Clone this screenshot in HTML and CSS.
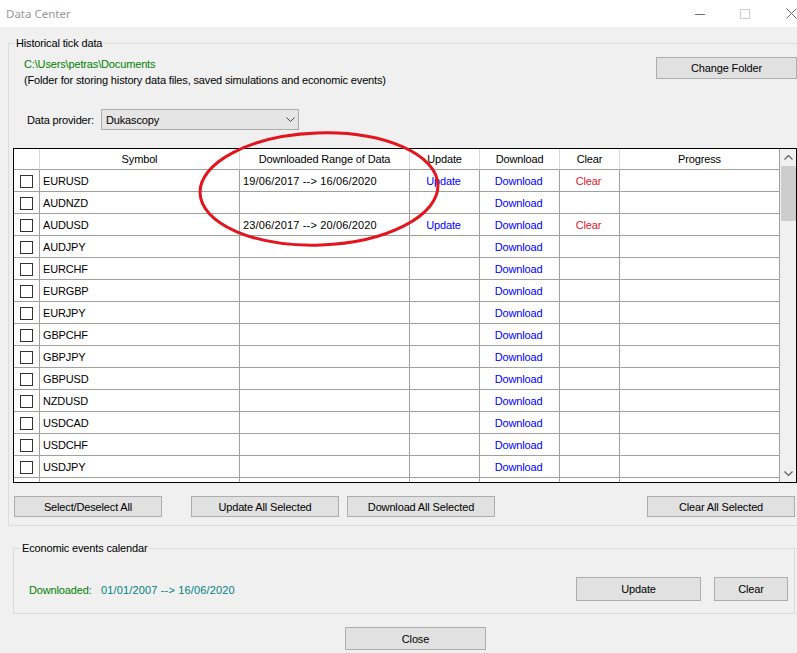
FILE: index.html
```html
<!DOCTYPE html>
<html>
<head>
<meta charset="utf-8">
<title>Data Center</title>
<link rel="stylesheet" href="styles.css">
</head>
<body>
<div class="titlebar">
  <span class="title">Data Center</span>
  <div class="caption">
    <svg class="cap-min" width="10" height="10" viewBox="0 0 10 10"><line x1="0" y1="5.5" x2="10" y2="5.5" stroke="#6f6f6f" stroke-width="1"/></svg>
    <svg class="cap-max" width="10" height="10" viewBox="0 0 10 10"><rect x="0.5" y="0.5" width="9" height="9" fill="none" stroke="#cfcfcf" stroke-width="1"/></svg>
    <svg class="cap-close" width="11" height="11" viewBox="0 0 11 11"><path d="M0.5 0.5 L10.5 10.5 M10.5 0.5 L0.5 10.5" stroke="#6f6f6f" stroke-width="1" fill="none"/></svg>
  </div>
</div>

<div class="group hist">
  <div class="legend">Historical tick data</div>
  <div class="folder-row">
    <div class="folder-text">
      <div class="path">C:\Users\petras\Documents</div>
      <div>(Folder for storing history data files, saved simulations and economic events)</div>
    </div>
    <button class="btn change">Change Folder</button>
  </div>
  <div class="provider">
    <span class="provider-label">Data provider:</span>
    <div class="select">
      <span>Dukascopy</span>
      <svg class="chev" width="9" height="5" viewBox="0 0 9 5"><path d="M0.5 0.5 L4.5 4.5 L8.5 0.5" fill="none" stroke="#444" stroke-width="1"/></svg>
    </div>
  </div>

  <div class="grid">
    <div class="grid-main">
      <div class="row hrow">
        <div class="cell"></div>
        <div class="cell">Symbol</div>
        <div class="cell">Downloaded Range of Data</div>
        <div class="cell">Update</div>
        <div class="cell">Download</div>
        <div class="cell">Clear</div>
        <div class="cell">Progress</div>
      </div>
      <div class="row"><div class="cell chk"><span class="box"></span></div><div class="cell sym">EURUSD</div><div class="cell sym date">19/06/2017 --&gt; 16/06/2020</div><div class="cell lnk">Update</div><div class="cell lnk">Download</div><div class="cell clr">Clear</div><div class="cell"></div></div>
      <div class="row"><div class="cell chk"><span class="box"></span></div><div class="cell sym">AUDNZD</div><div class="cell"></div><div class="cell"></div><div class="cell lnk">Download</div><div class="cell"></div><div class="cell"></div></div>
      <div class="row"><div class="cell chk"><span class="box"></span></div><div class="cell sym">AUDUSD</div><div class="cell sym date">23/06/2017 --&gt; 20/06/2020</div><div class="cell lnk">Update</div><div class="cell lnk">Download</div><div class="cell clr">Clear</div><div class="cell"></div></div>
      <div class="row"><div class="cell chk"><span class="box"></span></div><div class="cell sym">AUDJPY</div><div class="cell"></div><div class="cell"></div><div class="cell lnk">Download</div><div class="cell"></div><div class="cell"></div></div>
      <div class="row"><div class="cell chk"><span class="box"></span></div><div class="cell sym">EURCHF</div><div class="cell"></div><div class="cell"></div><div class="cell lnk">Download</div><div class="cell"></div><div class="cell"></div></div>
      <div class="row"><div class="cell chk"><span class="box"></span></div><div class="cell sym">EURGBP</div><div class="cell"></div><div class="cell"></div><div class="cell lnk">Download</div><div class="cell"></div><div class="cell"></div></div>
      <div class="row"><div class="cell chk"><span class="box"></span></div><div class="cell sym">EURJPY</div><div class="cell"></div><div class="cell"></div><div class="cell lnk">Download</div><div class="cell"></div><div class="cell"></div></div>
      <div class="row"><div class="cell chk"><span class="box"></span></div><div class="cell sym">GBPCHF</div><div class="cell"></div><div class="cell"></div><div class="cell lnk">Download</div><div class="cell"></div><div class="cell"></div></div>
      <div class="row"><div class="cell chk"><span class="box"></span></div><div class="cell sym">GBPJPY</div><div class="cell"></div><div class="cell"></div><div class="cell lnk">Download</div><div class="cell"></div><div class="cell"></div></div>
      <div class="row"><div class="cell chk"><span class="box"></span></div><div class="cell sym">GBPUSD</div><div class="cell"></div><div class="cell"></div><div class="cell lnk">Download</div><div class="cell"></div><div class="cell"></div></div>
      <div class="row"><div class="cell chk"><span class="box"></span></div><div class="cell sym">NZDUSD</div><div class="cell"></div><div class="cell"></div><div class="cell lnk">Download</div><div class="cell"></div><div class="cell"></div></div>
      <div class="row"><div class="cell chk"><span class="box"></span></div><div class="cell sym">USDCAD</div><div class="cell"></div><div class="cell"></div><div class="cell lnk">Download</div><div class="cell"></div><div class="cell"></div></div>
      <div class="row"><div class="cell chk"><span class="box"></span></div><div class="cell sym">USDCHF</div><div class="cell"></div><div class="cell"></div><div class="cell lnk">Download</div><div class="cell"></div><div class="cell"></div></div>
      <div class="row"><div class="cell chk"><span class="box"></span></div><div class="cell sym">USDJPY</div><div class="cell"></div><div class="cell"></div><div class="cell lnk">Download</div><div class="cell"></div><div class="cell"></div></div>
      <div class="row"><div class="cell"></div><div class="cell"></div><div class="cell"></div><div class="cell"></div><div class="cell"></div><div class="cell"></div><div class="cell"></div></div>
    </div>
    <div class="scroll">
      <div class="arrow">
        <svg width="9" height="5" viewBox="0 0 9 5"><path d="M0.5 4.5 L4.5 0.5 L8.5 4.5" fill="none" stroke="#606060" stroke-width="1.2"/></svg>
      </div>
      <div class="thumb"></div>
      <div class="track"></div>
      <div class="arrow">
        <svg width="9" height="5" viewBox="0 0 9 5"><path d="M0.5 0.5 L4.5 4.5 L8.5 0.5" fill="none" stroke="#606060" stroke-width="1.2"/></svg>
      </div>
    </div>
  </div>

  <div class="actions">
    <button class="btn act">Select/Deselect All</button>
    <button class="btn act a2">Update All Selected</button>
    <button class="btn act a3">Download All Selected</button>
    <button class="btn act a4">Clear All Selected</button>
  </div>
</div>

<div class="group econ">
  <div class="legend">Economic events calendar</div>
  <div class="econ-row">
    <span class="dl-label">Downloaded:</span>
    <span class="dl-range">01/01/2007 --&gt; 16/06/2020</span>
    <button class="btn eupd">Update</button>
    <button class="btn eclr">Clear</button>
  </div>
</div>

<div class="close-row">
  <button class="btn close">Close</button>
</div>

<svg class="mark" width="797" height="653" viewBox="0 0 797 653">
  <ellipse cx="319" cy="189" rx="119" ry="56" fill="none" stroke="#e3161f" stroke-width="3" transform="rotate(-2 319 189)"/>
</svg>
</body>
</html>
```

FILE: styles.css
```css
html, body {
  margin: 0;
  padding: 0;
  overflow: hidden;
}

body {
  width: 797px;
  height: 653px;
  background: #f0f0f0;
  font-family: "Liberation Sans", Arial, sans-serif;
  font-size: 11px;
  letter-spacing: -0.15px;
  color: #000;
  position: relative;
}

/* title bar */
.titlebar {
  height: 27px;
  background: #fff;
  display: flex;
  align-items: center;
}

.title {
  font-family: "Noto Sans", "Open Sans", sans-serif;
  font-size: 11.5px;
  letter-spacing: 0;
  color: #999;
  padding-left: 6px;
}

.caption {
  margin-left: auto;
  display: flex;
  align-items: center;
}

.cap-min { margin-right: 35px; }
.cap-max { margin-right: 36px; }
.cap-close { display: block; }

/* group boxes */
.group {
  border: 1px solid #dcdcdc;
  box-sizing: border-box;
}

.legend {
  width: fit-content;
  background: #f0f0f0;
  padding: 0 2px;
  line-height: 13px;
  margin-top: -7px;
}

.hist {
  margin: 16px 0 0 8px;
  width: 800px;
  padding-bottom: 8px;
}

.hist .legend {
  margin-left: 5px;
}

.folder-row {
  display: flex;
  align-items: flex-start;
  margin-top: 6px;
  padding-left: 15px;
}

.folder-text {
  line-height: 16px;
}

.path {
  color: #008000;
}

/* buttons */
.btn {
  font-family: inherit;
  font-size: 11px;
  letter-spacing: -0.15px;
  color: #000;
  background: #e1e1e1;
  border: 1px solid #adadad;
  box-sizing: border-box;
  padding: 0;
  margin: 0;
  text-align: center;
}

.change {
  width: 141px;
  height: 22px;
  margin: 1px 10px 0 auto;
}

/* provider */
.provider {
  display: flex;
  align-items: center;
  margin-top: 21px;
  padding-left: 18px;
}

.provider-label {
  width: 74px;
}

.select {
  width: 198px;
  height: 21px;
  box-sizing: border-box;
  border: 1px solid #acacac;
  background: #e5e5e5;
  display: flex;
  align-items: center;
  padding-left: 4px;
}

.chev {
  margin-left: auto;
  margin-right: 3px;
}

/* grid */
.grid {
  margin: 18px 0 0 4px;
  width: 784px;
  height: 335px;
  box-sizing: border-box;
  border: 1px solid #000;
  background: #fff;
  display: flex;
}

.grid-main {
  width: 766px;
  overflow: hidden;
}

.row {
  display: grid;
  grid-template-columns: 26px 200px 170px 70px 80px 60px 160px;
  height: 22px;
}

.cell {
  box-sizing: border-box;
  border-right: 1px solid #a0a0a0;
  border-bottom: 1px solid #a0a0a0;
  display: flex;
  align-items: center;
  white-space: nowrap;
  overflow: hidden;
}

.hrow {
  height: 21px;
}

.hrow .cell {
  justify-content: center;
  border-right-color: #d9d9d9;
}

.hrow .cell:last-child {
  border-right-color: #a0a0a0;
}

.chk {
  padding-left: 6px;
}

.box {
  width: 13px;
  height: 13px;
  box-sizing: border-box;
  border: 1px solid #333;
  background: #fff;
  margin-top: 1px;
}

.sym {
  padding-left: 3px;
}

.date {
  letter-spacing: 0.15px;
}

.lnk, .clr {
  justify-content: center;
  padding-right: 2px;
}

.lnk {
  color: #0000ff;
}

.clr {
  color: #e0182c;
}

/* scrollbar */
.scroll {
  width: 16px;
  background: #f0f0f0;
  display: flex;
  flex-direction: column;
}

.arrow {
  height: 17px;
  display: flex;
  align-items: center;
  justify-content: center;
  padding-left: 1px;
}

.thumb {
  height: 55px;
  margin-left: 1px;
  background: #cdcdcd;
}

.track {
  flex: 1;
}

/* bulk actions */
.actions {
  display: flex;
  margin-top: 13px;
  padding-left: 5px;
}

.act {
  width: 148px;
  height: 21px;
}

.a2 { margin-left: 29px; }
.a3 { margin-left: 8px; }
.a4 { margin-left: 152px; }

/* economic events */
.econ {
  margin: 22px 0 0 13px;
  width: 782px;
  padding-bottom: 12px;
}

.econ .legend {
  margin-left: 6px;
}

.econ-row {
  display: flex;
  align-items: center;
  margin-top: 22px;
  padding-left: 15px;
}

.dl-label {
  color: #008000;
  width: 72px;
  margin-top: 2px;
}

.dl-range {
  color: #008080;
  margin-top: 2px;
  letter-spacing: 0.15px;
}

.eupd {
  width: 125px;
  height: 24px;
  margin-left: auto;
}

.eclr {
  width: 74px;
  height: 24px;
  margin-left: 13px;
  margin-right: 6px;
}

/* close */
.close-row {
  margin-top: 13px;
  padding-left: 345px;
}

.close {
  width: 141px;
  height: 23px;
}

/* annotation ellipse drawn over the grid */
.mark {
  position: absolute;
  left: 0;
  top: 0;
  pointer-events: none;
}
```
